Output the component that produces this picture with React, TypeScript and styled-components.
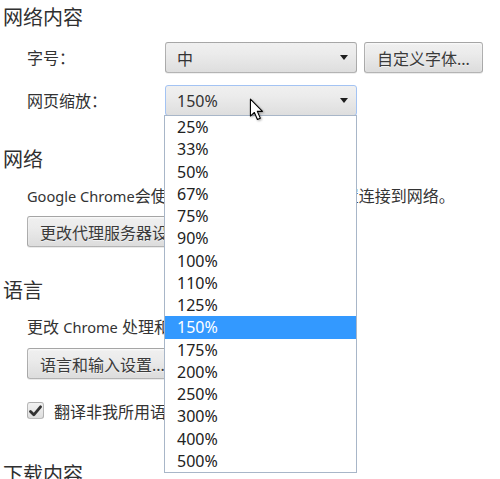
import React from 'react';
import styled, { createGlobalStyle } from 'styled-components';

const GlobalStyle = createGlobalStyle`
  body {
    margin: 0;
    background: #fff;
    font-family: "Noto Sans", "Noto Sans CJK SC", sans-serif;
    color: #333;
  }
`;

const zoomLevels = ['25%', '33%', '50%', '67%', '75%', '90%', '100%', '110%', '125%', '150%', '175%', '200%', '250%', '300%', '400%', '500%'];

const Page = styled.div`
  height: 479px;
  overflow: hidden;
  padding: 6px 0 0 3px;
  box-sizing: border-box;
`;

const Section = styled.section<{ $space?: number }>`
  margin-bottom: ${({ $space }) => $space ?? 32}px;
`;

const Heading = styled.h3`
  margin: 0;
  font-size: 20px;
  font-weight: normal;
  line-height: 24px;
  color: #303030;
`;

const Body = styled.div`
  padding-left: 24px;
  display: flex;
  flex-direction: column;
  align-items: flex-start;
`;

const FieldRow = styled.div<{ $top?: number }>`
  display: flex;
  align-items: center;
  margin-top: ${({ $top }) => $top ?? 12}px;
`;

const Label = styled.span`
  width: 138px;
  font-size: 16px;
  line-height: 20px;
`;

const Text = styled.div<{ $top?: number }>`
  margin-top: ${({ $top }) => $top ?? 0}px;
  font-size: 16px;
  line-height: 20px;
  white-space: nowrap;
`;

// latin words render a touch narrower than the CJK around them
const Latin = styled.span`
  font-size: 14.6px;
`;

const Button = styled.button<{ $top?: number; $left?: number }>`
  margin-top: ${({ $top }) => $top ?? 0}px;
  margin-left: ${({ $left }) => $left ?? 0}px;
  height: 31px;
  padding: 0 12px;
  font-family: inherit;
  font-size: 16px;
  color: #3a3a3a;
  white-space: nowrap;
  border: 1px solid rgba(0, 0, 0, 0.25);
  border-radius: 3px;
  background: linear-gradient(#f0f0f0, #ebebeb 38%, #dcdcdc);
  box-shadow: 0 1px 0 rgba(0, 0, 0, 0.08), inset 0 1px 2px rgba(255, 255, 255, 0.75);
  text-shadow: 0 1px 0 #f0f0f0;
`;

const SelectWrap = styled.div`
  position: relative;
`;

const SelectBox = styled.div<{ $focused?: boolean }>`
  position: relative;
  width: 192px;
  height: 31px;
  box-sizing: border-box;
  display: flex;
  align-items: center;
  padding-left: 11px;
  font-size: 16px;
  color: #333;
  border: 1px solid ${({ $focused }) => ($focused ? '#a3c3f3' : 'rgba(0, 0, 0, 0.25)')};
  border-radius: 3px;
  background: linear-gradient(#f0f0f0, #ebebeb 38%, #dedede);
  box-shadow: 0 1px 0 rgba(0, 0, 0, 0.06);

  &::after {
    content: '';
    position: absolute;
    right: 8px;
    top: 12px;
    border-left: 4.5px solid transparent;
    border-right: 4.5px solid transparent;
    border-top: 5px solid #1e1e1e;
  }
`;

const DropList = styled.ul`
  position: absolute;
  z-index: 2;
  top: 30px;
  left: -1px;
  width: 193px;
  margin: 0;
  padding: 0;
  list-style: none;
  background: #fff;
  border: 1px solid #a8b6c8;
  box-sizing: border-box;
`;

const DropItem = styled.li<{ $active?: boolean }>`
  height: 22.25px;
  line-height: 22.25px;
  padding-left: 12px;
  font-size: 16px;
  color: ${({ $active }) => ($active ? '#fff' : '#222')};
  background: ${({ $active }) => ($active ? '#3399ff' : 'transparent')};
`;

const Pointer = styled.svg`
  position: absolute;
  z-index: 3;
  left: 84px;
  top: 13px;
  filter: drop-shadow(1px 1px 1px rgba(0, 0, 0, 0.35));
`;

const CheckRow = styled.label`
  display: flex;
  align-items: center;
  margin-top: 21px;
  height: 21px;
  font-size: 16px;
  white-space: nowrap;
`;

const CheckBox = styled.span`
  width: 17px;
  height: 17px;
  box-sizing: border-box;
  margin-right: 10px;
  display: flex;
  align-items: center;
  justify-content: center;
  border: 1px solid rgba(0, 0, 0, 0.22);
  border-radius: 3px;
  background: linear-gradient(#f2f2f2, #dedede);
`;

export default function App() {
  return (
    <>
      <GlobalStyle />
      <Page>
        <Section>
          <Heading>网络内容</Heading>
          <Body>
            <FieldRow>
              <Label>字号：</Label>
              <SelectWrap>
                <SelectBox>中</SelectBox>
              </SelectWrap>
              <Button $left={7}>自定义字体...</Button>
            </FieldRow>
            <FieldRow>
              <Label>网页缩放：</Label>
              <SelectWrap>
                <SelectBox $focused>150%</SelectBox>
                <DropList>
                  {zoomLevels.map((z) => (
                    <DropItem key={z} $active={z === '150%'}>
                      {z}
                    </DropItem>
                  ))}
                </DropList>
                <Pointer width="16" height="23" viewBox="0 0 14 21">
                  <path
                    d="M1 1 L1 16.5 L4.6 13.2 L7.4 19.6 L10 18.4 L7.3 12.2 L12 12.2 Z"
                    fill="#fff"
                    stroke="#000"
                    strokeWidth="1"
                    strokeLinejoin="round"
                  />
                </Pointer>
              </SelectWrap>
            </FieldRow>
          </Body>
        </Section>

        <Section>
          <Heading>网络</Heading>
          <Body>
            <Text $top={14}>
              <Latin>Google Chrome</Latin>会使用您计算机的系统代理设置连接到网络。
            </Text>
            <Button $top={10}>更改代理服务器设置...</Button>
          </Body>
        </Section>

        <Section $space={42}>
          <Heading>语言</Heading>
          <Body>
            <Text $top={14}>
              更改 <Latin>Chrome</Latin> 处理和显示语言的方式
            </Text>
            <Button $top={11}>语言和输入设置...</Button>
            <CheckRow>
              <CheckBox>
                <svg width="13" height="12" viewBox="0 0 13 12">
                  <path d="M1.5 6.5 L4.8 9.8 L11.5 1.8" fill="none" stroke="#333" strokeWidth="2.8" strokeLinecap="round" strokeLinejoin="round" />
                </svg>
              </CheckBox>
              翻译非我所用语言的网页
            </CheckRow>
          </Body>
        </Section>

        <Section>
          <Heading>下载内容</Heading>
        </Section>
      </Page>
    </>
  );
}
